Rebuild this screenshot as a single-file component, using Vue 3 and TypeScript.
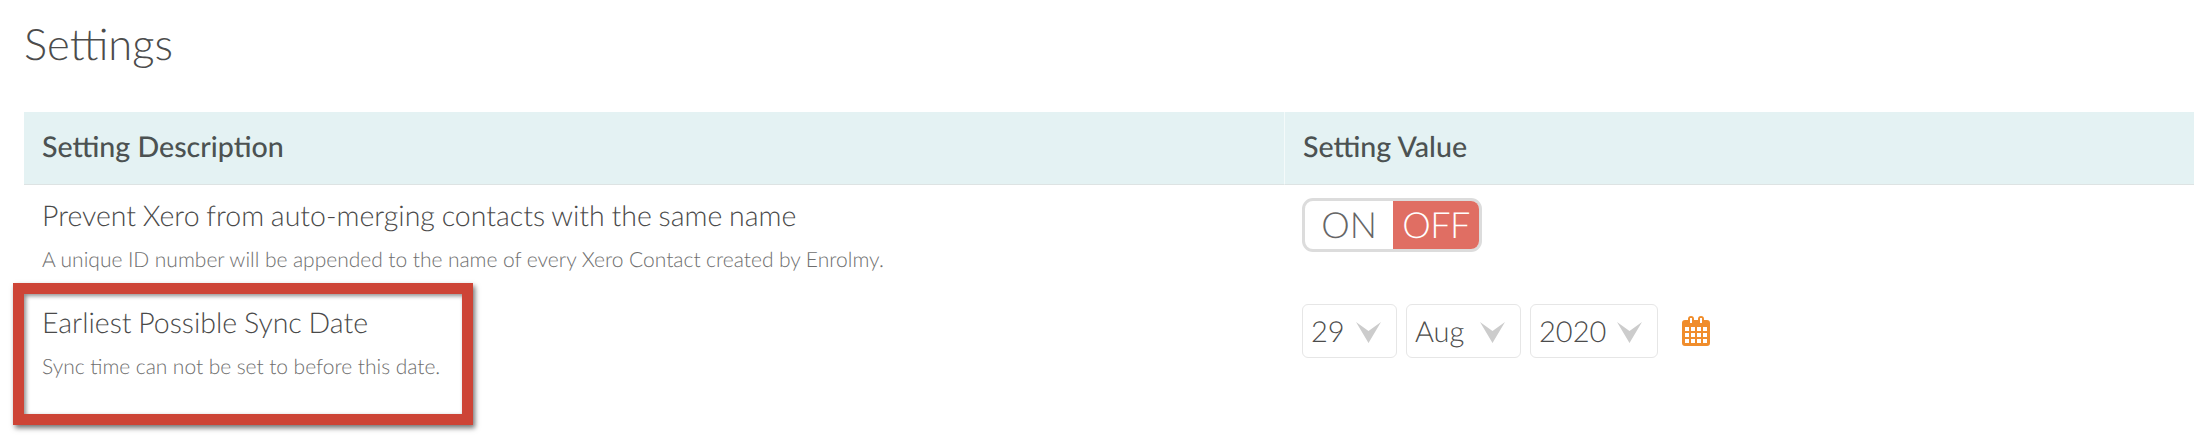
<template>
  <div class="page">
    <h1 class="title">Settings</h1>

    <div class="settings">
      <div class="head-cell">Setting Description</div>
      <div class="head-cell head-value">Setting Value</div>

      <div class="desc first">
        <div class="name">Prevent Xero from auto-merging contacts with the same name</div>
        <div class="hint">A unique ID number will be appended to the name of every Xero Contact created by Enrolmy.</div>
      </div>
      <div class="value first">
        <div class="toggle">
          <span class="toggle-on">ON</span>
          <span class="toggle-off">OFF</span>
        </div>
      </div>

      <div class="desc second">
        <div class="name">Earliest Possible Sync Date</div>
        <div class="hint">Sync time can not be set to before this date.</div>
      </div>
      <div class="value second">
        <div class="dates">
          <div v-for="d in dateParts" :key="d.label" class="select" :style="{ width: d.width + 'px' }">
            <span>{{ d.label }}</span>
            <svg class="chevron" width="25" height="21" viewBox="0 0 25 21">
              <path d="M0 0 L12.5 9 L25 0 L12.5 21 Z" fill="#cccccc" />
            </svg>
          </div>
          <svg class="calendar" width="28" height="30" viewBox="0 0 28 30">
            <path
              fill="#f08d2c"
              fill-rule="evenodd"
              d="M3 4 H6 V3 A3 3 0 0 1 12 3 V4 H16 V3 A3 3 0 0 1 22 3 V4 H25 A3 3 0 0 1 28 7 V27 A3 3 0 0 1 25 30 H3 A3 3 0 0 1 0 27 V7 A3 3 0 0 1 3 4 Z
                 M8 2 V7 H10 V2 Z M18 2 V7 H20 V2 Z
                 M3 11 V15 H7 V11 Z M9 11 V15 H13 V11 Z M15 11 V15 H19 V11 Z M21 11 V15 H25 V11 Z
                 M3 17 V21 H7 V17 Z M9 17 V21 H13 V17 Z M15 17 V21 H19 V17 Z M21 17 V21 H25 V17 Z
                 M3 23 V27 H7 V23 Z M9 23 V27 H13 V23 Z M15 23 V27 H19 V23 Z M21 23 V27 H25 V23 Z"
            />
          </svg>
        </div>
      </div>
    </div>

    <!-- annotation drawn over the screenshot -->
    <div class="callout"></div>
  </div>
</template>

<script setup lang="ts">
interface DatePart {
  label: string
  width: number
}

const dateParts: DatePart[] = [
  { label: '29', width: 95 },
  { label: 'Aug', width: 115 },
  { label: '2020', width: 128 },
]
</script>

<style>
html,
body {
  margin: 0;
  background: #fff;
  overflow: hidden;
}
</style>

<style scoped>
.page {
  position: relative;
  height: 439px;
  padding-left: 24px;
  box-sizing: border-box;
  font-family: Lato, 'Open Sans', sans-serif;
  color: #555;
  text-rendering: geometricPrecision;
}

.title {
  margin: 0;
  height: 112px;
  padding-top: 17px;
  box-sizing: border-box;
  font-size: 43.5px;
  line-height: 54px;
  font-weight: 300;
  color: #4c4c4c;
}

.settings {
  display: grid;
  grid-template-columns: 1260px 1fr;
}

.head-cell {
  height: 73px;
  box-sizing: border-box;
  padding-left: 18px;
  background: #e4f2f3;
  border-bottom: 1px solid #dde3e3;
  font-size: 28.6px;
  line-height: 70px;
  font-weight: 500;
  color: #4c5252;
}

.head-value {
  border-left: 1px solid #f4fafa;
}

.desc {
  padding-left: 18px;
}

.desc.first {
  height: 98px;
  padding-top: 14px;
  box-sizing: border-box;
}

.value {
  padding-left: 18px;
}

.value.first {
  padding-top: 13px;
}

.desc.second {
  padding-top: 23px;
}

.value.second {
  padding-top: 21px;
}

.name {
  font-size: 28.5px;
  line-height: 34px;
  font-weight: 300;
  word-spacing: -1px;
  color: #4a4a4a;
}

.hint {
  margin-top: 14px;
  font-size: 21px;
  line-height: 26px;
  font-weight: 300;
  word-spacing: -0.2px;
  color: #6e6e6e;
}

.toggle {
  display: flex;
  width: 180px;
  height: 54px;
  box-sizing: border-box;
  border: 3px solid #dcdcdc;
  border-radius: 11px;
  overflow: hidden;
  font-size: 36px;
  line-height: 46px;
  font-weight: 300;
}

.toggle-on {
  flex: 1;
  text-align: center;
  color: #666;
}

.toggle-off {
  width: 86px;
  text-align: center;
  background: #e06e63;
  color: #fff;
  letter-spacing: -0.5px;
}

.dates {
  display: flex;
  align-items: center;
  gap: 9px;
}

.select {
  display: flex;
  align-items: center;
  justify-content: space-between;
  height: 54px;
  box-sizing: border-box;
  padding: 0 15px 0 8px;
  border: 1px solid #e6e6e6;
  border-radius: 6px;
  font-size: 29px;
  font-weight: 300;
  color: #4c4c4c;
}

.chevron {
  margin-top: 2px;
}

.calendar {
  margin-left: 15px;
}

.callout {
  position: absolute;
  left: 13px;
  top: 283px;
  width: 460px;
  height: 142px;
  box-sizing: border-box;
  border: 11px solid #cd4436;
  box-shadow: 2px 3px 5px rgba(0, 0, 0, 0.55), inset 2px 2px 4px rgba(0, 0, 0, 0.45);
}
</style>
